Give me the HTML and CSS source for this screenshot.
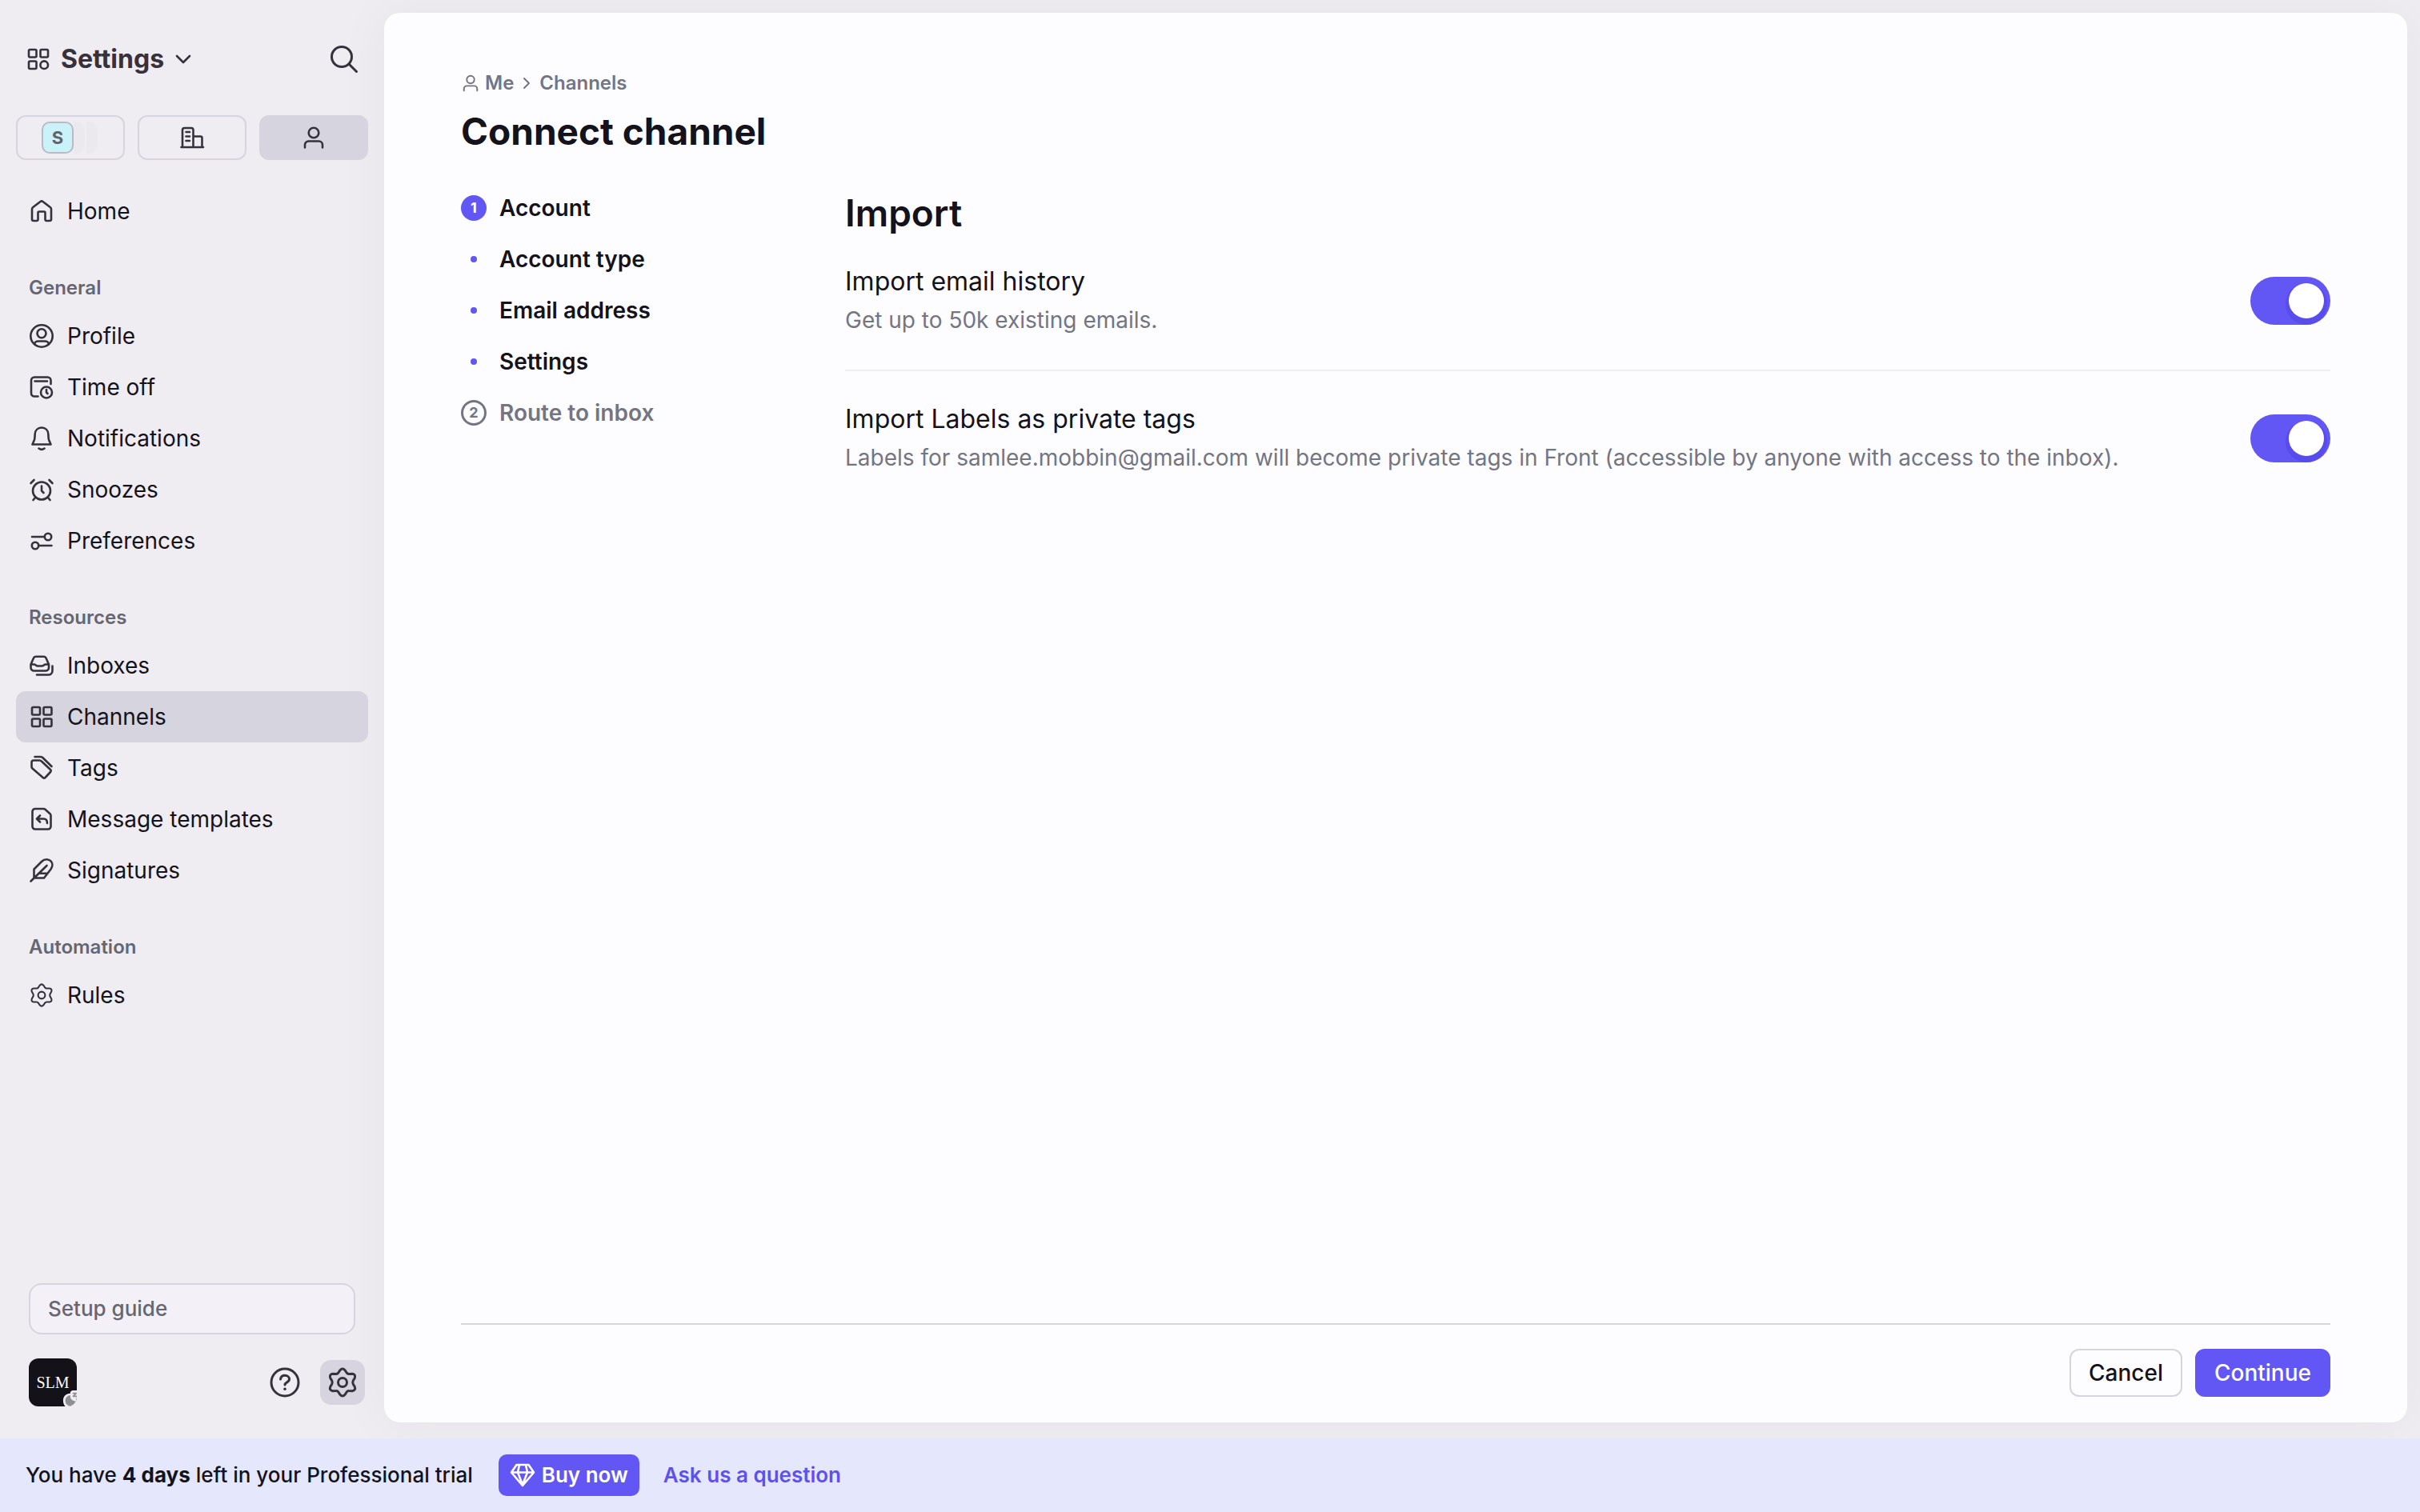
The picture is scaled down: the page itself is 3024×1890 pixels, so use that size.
FILE: index.html
```html
<!DOCTYPE html>
<html lang="en">
<head>
<meta charset="utf-8">
<meta name="viewport" content="width=device-width, initial-scale=1">
<title>Connect channel</title>
<link rel="stylesheet" href="styles.css">
</head>
<body>
<svg class="sprite" aria-hidden="true">
  <symbol id="i-apps" viewBox="0 0 32 32"><rect x="4" y="4" width="9.5" height="9.5" rx="1.5"/><rect x="18.5" y="4" width="9.5" height="9.5" rx="1.5"/><rect x="4" y="18.5" width="9.5" height="9.5" rx="1.5"/><circle cx="23.2" cy="23.2" r="4.8"/></symbol>
  <symbol id="i-grid" viewBox="0 0 32 32"><rect x="4" y="4" width="10" height="9.5" rx="1.5"/><rect x="18.5" y="4" width="10" height="9.5" rx="1.5"/><rect x="4" y="18.5" width="10" height="9.5" rx="1.5"/><rect x="18.5" y="18.5" width="10" height="9.5" rx="1.5"/></symbol>
  <symbol id="i-user" viewBox="0 0 32 32"><circle cx="16" cy="10" r="6.3"/><path d="M5 28.5V25a4.5 4.5 0 0 1 4.500-4.500h13A4.500 4.500 0 0 1 27 25v3.500"/></symbol>
  <symbol id="i-building" viewBox="0 0 32 32"><path d="M4 28V6.500a2.500 2.500 0 0 1 2.500-2.500h8.500a2.500 2.500 0 0 1 2.500 2.500V28M17.500 14.500h9a2 2 0 0 1 2 2V28M2.500 28h27.500M8.500 9h4.500M8.500 14.500h4.500M8.500 20h4.500"/></symbol>
  <symbol id="i-home" viewBox="0 0 32 32"><path d="M4 13.500a3 3 0 0 1 1.300-2.500L14.500 4a2.500 2.500 0 0 1 3 0l9.200 7a3 3 0 0 1 1.300 2.500V26a2 2 0 0 1-2 2h-4a1.500 1.500 0 0 1-1.500-1.500V18a1.500 1.500 0 0 0-1.500-1.500h-6a1.500 1.500 0 0 0-1.500 1.500v8.500A1.500 1.500 0 0 1 10 28H6a2 2 0 0 1-2-2z"/></symbol>
  <symbol id="i-profile" viewBox="0 0 32 32"><circle cx="16" cy="16" r="13.700"/><circle cx="16" cy="12.700" r="5.500"/><path d="M7 26c.5-2.500 2.500-3.500 5-3.500h8c2.500 0 4.500 1 5 3.500"/></symbol>
  <symbol id="i-timeoff" viewBox="0 0 32 32"><path d="M27.500 12V7.500a4 4 0 0 0-4-4H7a4 4 0 0 0-4 4v16a4 4 0 0 0 4 4h4.500M7.500 8.500h15.500"/><circle cx="22" cy="22.500" r="7"/><path d="M22 19v3.500l1.500 1.500"/></symbol>
  <symbol id="i-bell" viewBox="0 0 32 32"><path d="M16 2.500c-5 0-8 3.500-8.300 8L7.300 16c0 1.500-.6 2.500-1.300 4l-1.500 3.500h23L26 20c-.7-1.500-1.300-2.500-1.300-4l-.4-5.500c-.3-4.500-3.300-8-8.300-8zM12.500 28.500c2 1.500 5 1.500 7 0"/></symbol>
  <symbol id="i-alarm" viewBox="0 0 32 32"><circle cx="16" cy="17.500" r="11"/><path d="M16 11.500v6l2.500 2.500M2.500 8l4-4M29.500 8l-4-4M8.500 25.500L5.500 29M23.500 25.500l3 3.500"/></symbol>
  <symbol id="i-sliders" viewBox="0 0 32 32"><circle cx="24" cy="11" r="4.200"/><circle cx="8" cy="22" r="4.200"/><path d="M4 11h15.500M12.500 22h16"/></symbol>
  <symbol id="i-inbox" viewBox="0 0 32 32"><path d="M2.500 14.500L5.800 7A3.500 3.500 0 0 1 9 4.800h9.500A3.500 3.500 0 0 1 21.700 7l3.300 7.500v4a4 4 0 0 1-4 4H6.500a4 4 0 0 1-4-4zM2.500 14.500h4c2 0 2.500 2 4.500 2h5.500c2 0 2.500-2 4.500-2h4M29.500 16.500v6a5 5 0 0 1-5 5H10"/></symbol>
  <symbol id="i-tags" viewBox="0 0 32 32"><path d="M3.500 9a2.500 2.500 0 0 1 2.500-2.500h7.500a3.500 3.500 0 0 1 2.300 1L27 18a2 2 0 0 1 0 3l-6.500 7a2 2 0 0 1-2.800 0L4.700 16.800a3.500 3.500 0 0 1-1.200-2.300zM7.500 2h7.500a3.500 3.500 0 0 1 2.300 1L28.500 14"/></symbol>
  <symbol id="i-template" viewBox="0 0 32 32"><path d="M8 3h10.500a3 3 0 0 1 2 .8l6 5.500a3 3 0 0 1 1 2.200V25a3.500 3.500 0 0 1-3.500 3.500H8A3.500 3.500 0 0 1 4.500 25V6.500A3.500 3.500 0 0 1 8 3zM14 11.500l-4 4 4 4M10.500 15.500h8c3 0 4.500 2 4.500 5.500"/></symbol>
  <symbol id="i-feather" viewBox="0 0 32 32"><path d="M2.500 29.500L22.500 10M6.500 25.500V14.500L16 5c4-4 9-3.200 11.500-.7S30 11 27.500 14.500L19 25.500H6.500M12.500 19.800h11"/></symbol>
  <symbol id="i-gear" viewBox="-20 -20 40 40"><path d="M-3-15.300Q0-18.700 3-15.300L5.200-12Q6.300-10.500 8-10.600L12.200-10.700Q16.800-10 15.300-5.600L13.200-2Q12.300 0 13.200 2L15.300 5.600Q16.800 10 12.200 10.700L8 10.600Q6.300 10.500 5.200 12L3 15.300Q0 18.700-3 15.300L-5.200 12Q-6.300 10.500-8 10.600L-12.200 10.700Q-16.800 10-15.300 5.600L-13.200 2Q-12.300 0-13.200-2L-15.300-5.600Q-16.800-10-12.200-10.700L-8-10.600Q-6.300-10.500-5.200-12Z"/><circle r="5.500"/></symbol>
</svg>

<div class="app">
  <aside class="sidebar">
    <header class="side-head">
      <button class="menu-btn" type="button">
        <svg class="icon"><use href="#i-apps"/></svg>
        <span>Settings</span>
        <svg class="chev" viewBox="0 0 24 24"><path d="M4 8l8 8 8-8"/></svg>
      </button>
      <button class="icon-btn" type="button" aria-label="Search"><svg class="icon-lg" viewBox="0 0 40 40"><circle cx="17" cy="17" r="12.500"/><path d="M26 26l9.500 9.500"/></svg></button>
    </header>

    <div class="scopes">
      <button class="scope" type="button" aria-label="Workspace"><span class="ws"><span class="ws-tile">S</span><span class="ws-ghost"></span><span class="ws-ghost"></span></span></button>
      <button class="scope" type="button" aria-label="Company"><svg class="icon"><use href="#i-building"/></svg></button>
      <button class="scope scope-on" type="button" aria-label="Me"><svg class="icon"><use href="#i-user"/></svg></button>
    </div>

    <nav class="nav">
      <a class="nav-item" href="#home"><svg class="icon"><use href="#i-home"/></svg>Home</a>
      <h2 class="nav-head">General</h2>
      <a class="nav-item" href="#profile"><svg class="icon"><use href="#i-profile"/></svg>Profile</a>
      <a class="nav-item" href="#timeoff"><svg class="icon"><use href="#i-timeoff"/></svg>Time off</a>
      <a class="nav-item" href="#notifications"><svg class="icon"><use href="#i-bell"/></svg>Notifications</a>
      <a class="nav-item" href="#snoozes"><svg class="icon"><use href="#i-alarm"/></svg>Snoozes</a>
      <a class="nav-item" href="#preferences"><svg class="icon"><use href="#i-sliders"/></svg>Preferences</a>
      <h2 class="nav-head">Resources</h2>
      <a class="nav-item" href="#inboxes"><svg class="icon"><use href="#i-inbox"/></svg>Inboxes</a>
      <a class="nav-item nav-on" href="#channels" aria-current="page"><svg class="icon"><use href="#i-grid"/></svg>Channels</a>
      <a class="nav-item" href="#tags"><svg class="icon"><use href="#i-tags"/></svg>Tags</a>
      <a class="nav-item" href="#templates"><svg class="icon"><use href="#i-template"/></svg>Message templates</a>
      <a class="nav-item" href="#signatures"><svg class="icon"><use href="#i-feather"/></svg>Signatures</a>
      <h2 class="nav-head">Automation</h2>
      <a class="nav-item" href="#rules"><svg class="icon"><use href="#i-gear"/></svg>Rules</a>
    </nav>

    <footer class="side-foot">
      <button class="guide" type="button">Setup guide</button>
      <div class="tools">
        <button class="avatar" type="button" aria-label="Account, snoozed">
          <span>SLM</span>
          <svg class="status" viewBox="0 0 20 22" aria-hidden="true"><path class="status-ring" d="M20 0h-5c-3 0-4.500 2-4 4C5 4 1 8 1 14c0 3 1 6 3 8h16z"/><path class="status-moon" d="M11 6.500c-4 .3-7 3.500-7 7.500 0 4.500 3 7 7 7s6.500-3 6.500-6.500c-4 0-7-3-6.500-8z"/><path class="status-zed" d="M15 4h4l-4 4h5"/></svg>
        </button>
        <button class="icon-btn help" type="button" aria-label="Help"><svg class="icon-lg" viewBox="0 0 40 40"><circle cx="20" cy="20" r="17"/><path d="M14.500 16c.5-3 2.500-4.700 5.500-4.700s5.500 2 5.500 4.800c0 4-5.500 3.500-5.500 7"/><circle class="dot" cx="20" cy="28.300" r="1.800"/></svg></button>
        <button class="icon-btn gear-on" type="button" aria-label="Settings"><svg class="icon-lg"><use href="#i-gear"/></svg></button>
      </div>
    </footer>
  </aside>

  <main class="card">
    <nav class="crumbs" aria-label="Breadcrumb">
      <a href="#me"><svg class="icon-sm"><use href="#i-user"/></svg>Me</a>
      <svg class="crumb-sep" viewBox="0 0 12 16"><path d="M3 2l6 6-6 6"/></svg>
      <a href="#channels">Channels</a>
    </nav>
    <h1 class="title">Connect channel</h1>

    <div class="body">
      <ol class="steps">
        <li class="step"><span class="num num-on">1</span>Account</li>
        <li class="step"><span class="bullet"></span>Account type</li>
        <li class="step"><span class="bullet"></span>Email address</li>
        <li class="step"><span class="bullet"></span>Settings</li>
        <li class="step step-off"><span class="num">2</span>Route to inbox</li>
      </ol>

      <section class="panel">
        <h2 class="panel-title">Import</h2>
        <div class="row">
          <div class="row-text">
            <label class="row-name" for="history">Import email history</label>
            <p class="row-desc" id="history-desc">Get up to 50k existing emails.</p>
          </div>
          <input class="toggle" type="checkbox" role="switch" id="history" aria-describedby="history-desc" checked>
        </div>
        <div class="row">
          <div class="row-text">
            <label class="row-name" for="labels">Import Labels as private tags</label>
            <p class="row-desc" id="labels-desc">Labels for samlee.mobbin@gmail.com will become private tags in Front (accessible by anyone with access to the inbox).</p>
          </div>
          <input class="toggle" type="checkbox" role="switch" id="labels" aria-describedby="labels-desc" checked>
        </div>
      </section>
    </div>

    <footer class="actions">
      <button class="btn" type="button">Cancel</button>
      <button class="btn btn-primary" type="button">Continue</button>
    </footer>
  </main>
</div>

<div class="banner">
  <p>You have <b>4 days</b> left in your Professional trial</p>
  <button class="buy" type="button"><svg class="gem" viewBox="0 0 32 32"><path d="M8.500 3h15L30 12.500 16 29 2 12.500zM2 12.500h28M12 3l-2 9.500L16 28l6-15.500L20 3"/></svg>Buy now</button>
  <a class="ask" href="#ask">Ask us a question</a>
</div>
</body>
</html>
```

FILE: styles.css
```css
:root {
  --ink: #14121a;
  --icon: #35313d;
  --muted: #656672;
  --soft: #747583;
  --line: #d6d4de;
  --accent: #6257f5;
  --accent-dark: #584ced;
  --page: #efedf2;
  --card: #fdfdff;
}

* { box-sizing: border-box; }

body {
  margin: 0;
  min-height: 100vh;
  display: flex;
  flex-direction: column;
  background: var(--page);
  color: var(--ink);
  font: 400 28px/32px Inter, "Liberation Sans", sans-serif;
}

h1, h2, p, ol { margin: 0; padding: 0; font-weight: inherit; }
a { color: inherit; text-decoration: none; }
button {
  margin: 0;
  padding: 0;
  border: 0;
  background: none;
  color: inherit;
  font: inherit;
}

svg { fill: none; stroke: currentColor; stroke-linecap: round; stroke-linejoin: round; }
.sprite { position: absolute; width: 0; height: 0; }
.icon { width: 32px; height: 32px; stroke-width: 2.6; color: var(--icon); flex: none; }
.icon-lg { width: 40px; height: 40px; stroke-width: 3; color: var(--icon); display: block; }
.icon-sm { width: 24px; height: 24px; stroke-width: 2.6; }

.app {
  flex: 1;
  display: grid;
  grid-template-columns: 480px minmax(0, 1fr);
  overflow: hidden;
}

/* Sidebar */
.sidebar {
  position: relative;
  z-index: 1;
  display: flex;
  flex-direction: column;
  padding: 46px 20px 38px;
}
.side-head {
  display: flex;
  justify-content: space-between;
  align-items: center;
  height: 56px;
  padding: 0 10px 0 12px;
}
.menu-btn {
  display: flex;
  align-items: center;
  gap: 12px;
  color: var(--icon);
  font-size: 32px;
  font-weight: 700;
}
.chev { width: 24px; height: 24px; stroke-width: 2.6; }

.scopes {
  display: grid;
  grid-template-columns: repeat(3, 1fr);
  gap: 16px;
  margin-top: 42px;
  margin-bottom: 32px;
}
.scope {
  display: flex;
  align-items: center;
  justify-content: center;
  height: 56px;
  border: 2px solid var(--line);
  border-radius: 12px;
}
.scope-on { background: var(--line); }
.ws { display: flex; }
.ws-tile {
  width: 40px;
  height: 40px;
  border: 2px solid #bbb9c4;
  border-radius: 10px;
  background: #c9f2f9;
  color: #62626e;
  font-size: 22px;
  font-weight: 700;
  line-height: 36px;
}
.ws-ghost { width: 16px; border-radius: 0 12px 12px 0; background: #ebe9ee; border-right: 2px solid var(--page); }

.nav-item {
  display: flex;
  align-items: center;
  gap: 16px;
  height: 64px;
  padding: 0 16px;
  border-radius: 12px;
}
.nav-on { background: var(--line); }
.nav-head {
  padding: 48px 16px 12px;
  color: var(--muted);
  font-size: 24px;
  font-weight: 600;
}

.side-foot { margin-top: auto; padding: 0 4px 0 16px; }
.guide {
  display: block;
  width: calc(100% - 12px);
  height: 64px;
  padding: 0 22px;
  border: 2px solid var(--line);
  border-radius: 16px;
  background: #f3f1f7;
  color: var(--muted);
  font-size: 26px;
  font-weight: 500;
  text-align: left;
}
.tools { display: flex; align-items: center; margin-top: 28px; height: 64px; }
.avatar {
  position: relative;
  width: 60px;
  height: 60px;
  border-radius: 12px;
  overflow: hidden;
  background: #131218;
  color: #fff;
  font: 20px/52px "Liberation Serif", serif;
  margin-right: auto;
}
.status { position: absolute; right: 0; bottom: 0; width: 18px; height: 20px; stroke: none; }
.status-ring { fill: #efedf2; }
.status-moon { fill: #8e8f93; }
.status-zed { stroke: #8e8f93; stroke-width: 2; }
.icon-btn {
  display: flex;
  align-items: center;
  justify-content: center;
}
.help { margin-right: 24px; }
.help .dot { fill: currentColor; stroke: none; }
.gear-on {
  width: 56px;
  height: 56px;
  border-radius: 14px;
  background: var(--line);
}

/* Card */
.card {
  display: flex;
  flex-direction: column;
  margin: 16px 16px 20px 0;
  padding: 72px 96px 32px;
  border-radius: 20px;
  background: var(--card);
  box-shadow: 0 0 60px 8px rgba(20, 18, 26, 0.035);
}
.crumbs {
  display: flex;
  align-items: center;
  gap: 10px;
  color: var(--soft);
  font-size: 24px;
  font-weight: 600;
}
.crumbs a { display: flex; align-items: center; gap: 6px; }
.crumb-sep { width: 12px; height: 16px; stroke-width: 2; }
.title {
  margin-top: 16px;
  font-size: 46px;
  font-weight: 700;
  line-height: 56px;
}
.body {
  flex: 1;
  display: grid;
  grid-template-columns: 480px minmax(0, 1fr);
  padding-top: 36px;
}
.steps { list-style: none; }
.step {
  display: flex;
  align-items: center;
  gap: 16px;
  height: 64px;
  font-weight: 600;
}
.step-off { color: var(--soft); }
.num {
  width: 32px;
  height: 32px;
  border: 3px solid currentColor;
  border-radius: 50%;
  font-size: 18px;
  font-weight: 700;
  line-height: 26px;
  text-align: center;
}
.num-on { border-color: var(--accent); background: var(--accent); color: #fff; }
.bullet { width: 8px; height: 8px; margin: 0 12px; border-radius: 50%; background: var(--accent); }

.panel-title {
  padding: 12px 0 0;
  font-size: 46px;
  font-weight: 600;
  line-height: 52px;
}
.row {
  display: flex;
  align-items: center;
  justify-content: space-between;
  gap: 32px;
  padding: 36px 0 38px;
}
.row + .row { border-top: 2px solid #eeeef2; }
.row-name { display: block; font-size: 32px; line-height: 48px; }
.row-desc { color: var(--soft); line-height: 48px; }
.toggle {
  appearance: none;
  flex: none;
  width: 100px;
  height: 60px;
  margin: 0;
  padding: 8px;
  border-radius: 30px;
  background: var(--accent);
}
.toggle::before {
  content: "";
  display: block;
  width: 44px;
  height: 44px;
  margin-left: auto;
  border-radius: 50%;
  background: #fff;
  box-shadow: 0 4px 0 4px var(--accent-dark);
}

.actions {
  display: flex;
  justify-content: flex-end;
  gap: 16px;
  padding-top: 30px;
  border-top: 2px solid var(--line);
}
.btn {
  height: 60px;
  padding: 0 22px;
  border: 2px solid var(--line);
  border-radius: 12px;
  font-weight: 500;
}
.btn-primary { border-color: var(--accent); background: var(--accent); color: #fff; }

/* Trial banner */
.banner {
  position: relative;
  display: flex;
  align-items: center;
  height: 92px;
  padding: 0 32px;
  background: #e5e7fd;
  font-size: 26px;
  font-weight: 500;
}
.banner b { font-weight: 700; }
.buy {
  display: flex;
  align-items: center;
  gap: 8px;
  height: 52px;
  margin: 0 30px 0 32px;
  padding: 0 14px;
  border-radius: 10px;
  background: var(--accent);
  color: #fff;
  font-weight: 600;
}
.gem { width: 32px; height: 32px; stroke-width: 2.6; }
.ask { color: #5c50ee; font-weight: 600; }
```
